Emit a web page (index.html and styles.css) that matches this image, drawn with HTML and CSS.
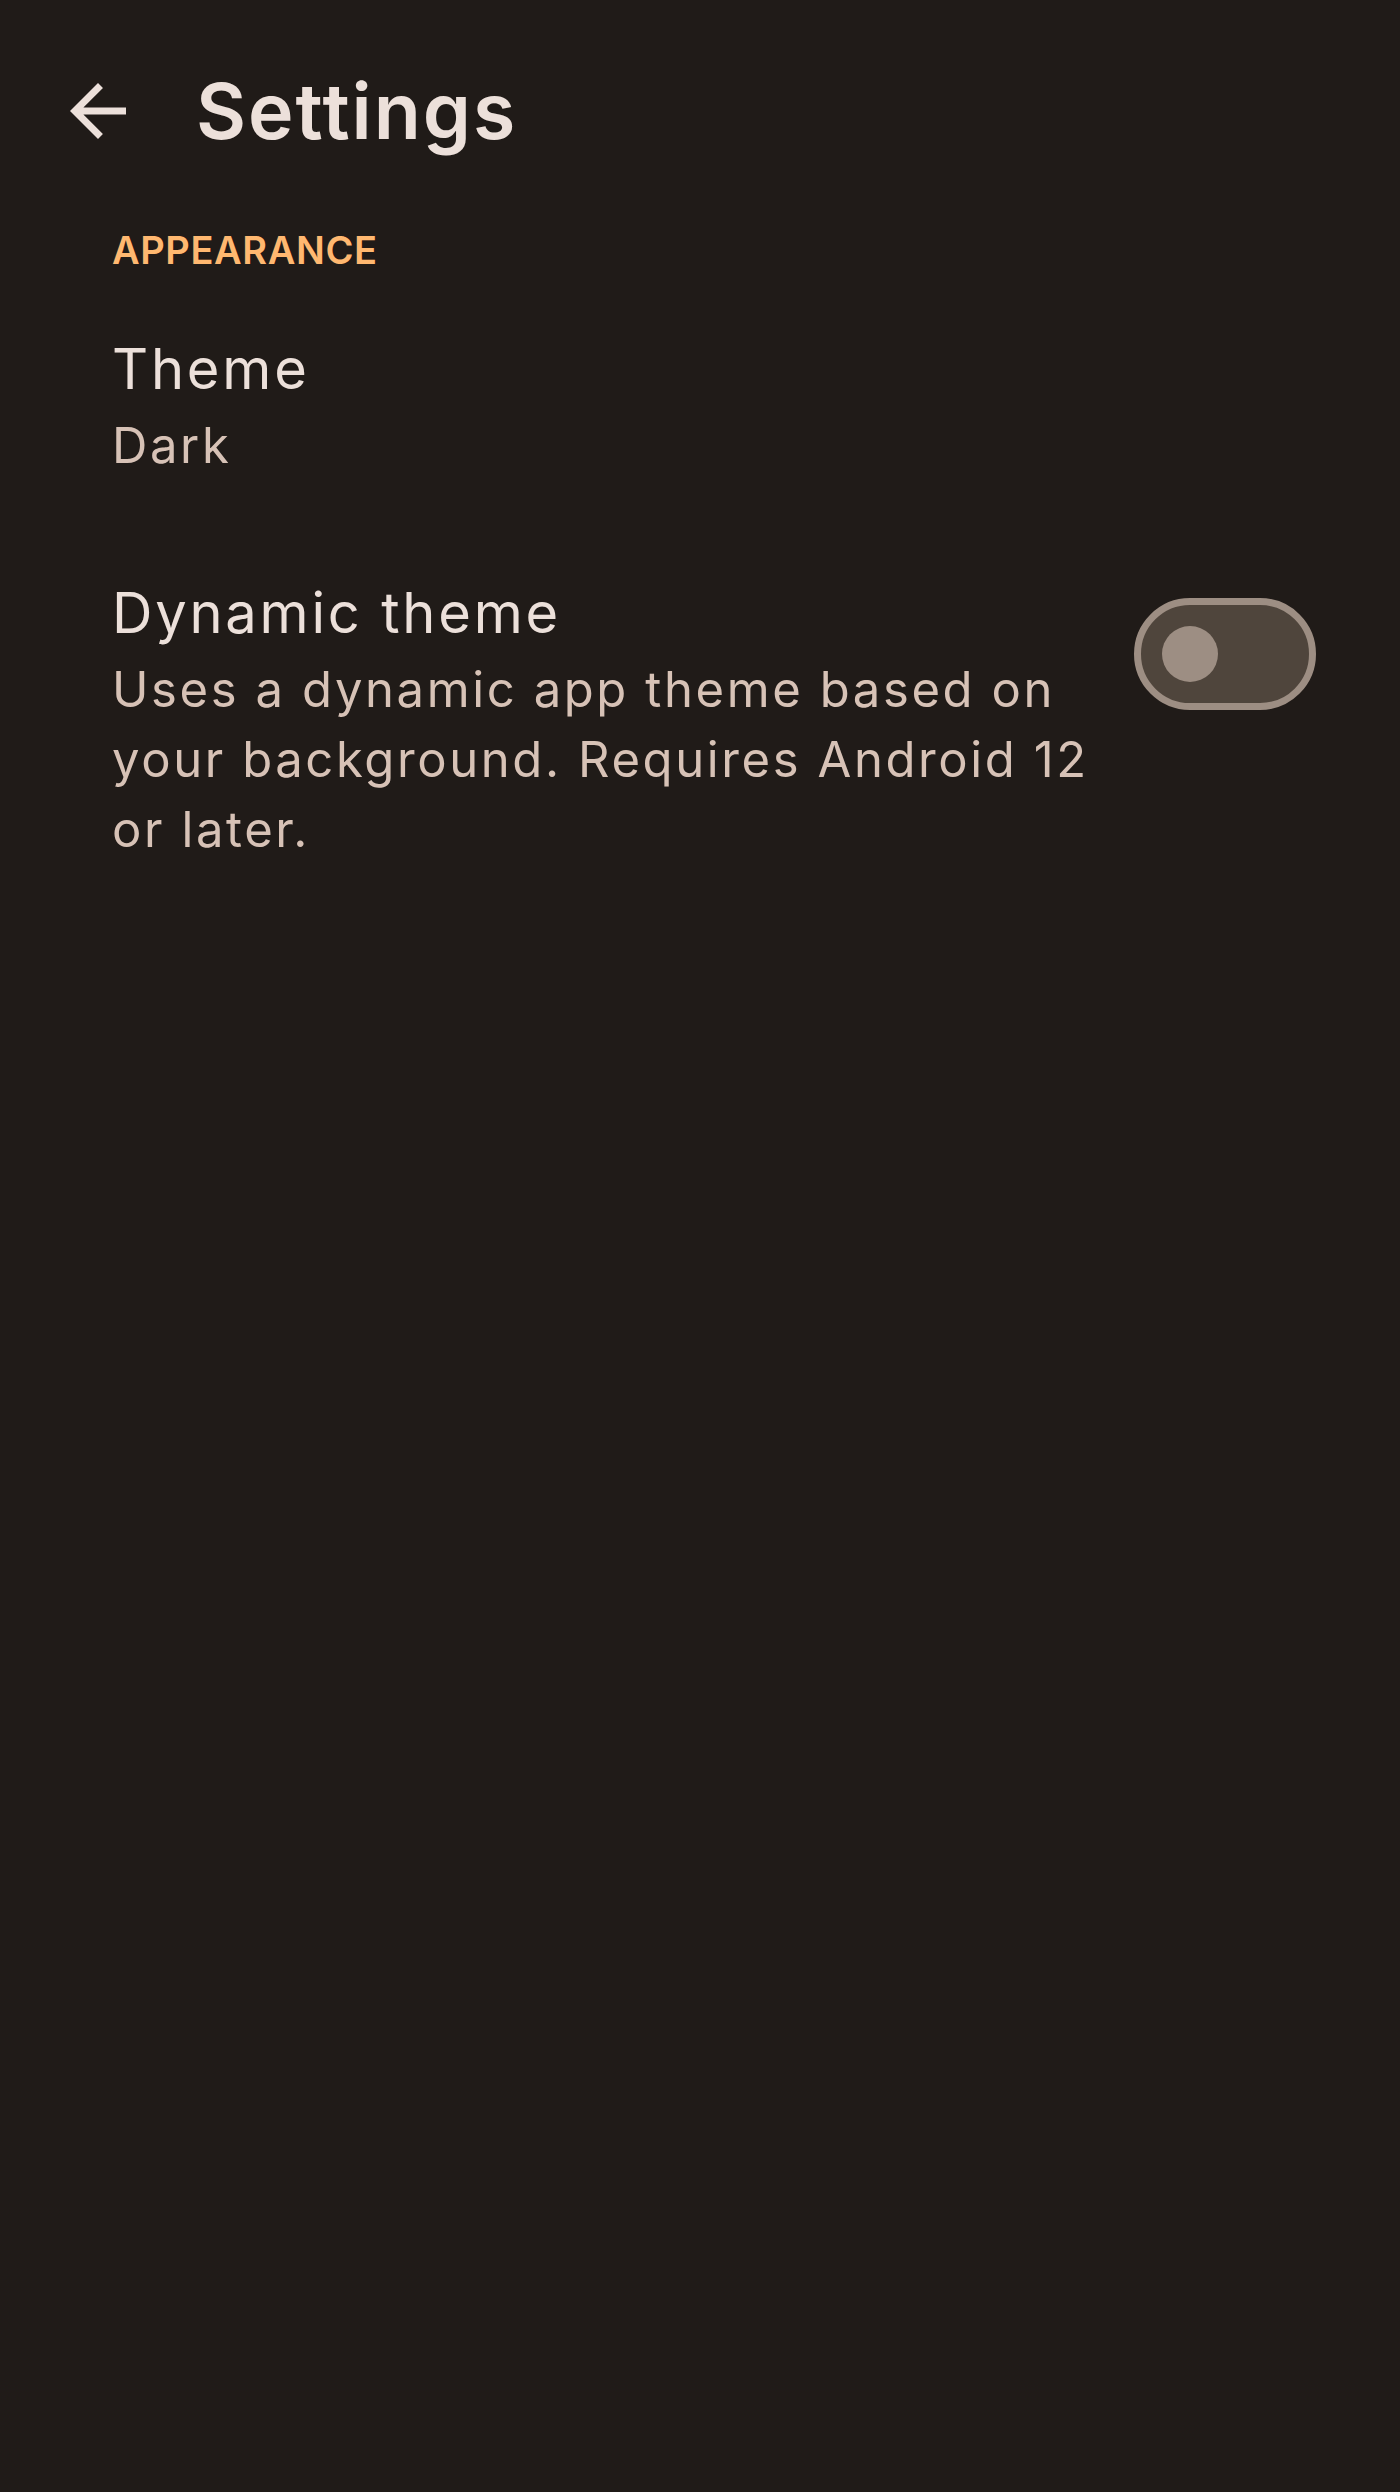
FILE: index.html
```html
<!DOCTYPE html>
<html lang="en">
<head>
<meta charset="utf-8">
<title>Settings</title>
<link rel="stylesheet" href="styles.css">
</head>
<body>
<div class="screen">
  <header class="topbar">
    <button class="nav-btn" aria-label="Back">
      <svg class="nav-icon" viewBox="0 0 24 24" width="84" height="84"><path d="M20 11H7.83l5.59-5.59L12 4l-8 8 8 8 1.41-1.41L7.83 13H20v-2z" fill="currentColor"/></svg>
    </button>
    <h1 class="title">Settings</h1>
  </header>
  <main class="content">
    <div class="section-label">APPEARANCE</div>
    <div class="item item-theme">
      <div class="item-text">
        <div class="item-title">Theme</div>
        <div class="item-sub">Dark</div>
      </div>
    </div>
    <div class="item item-dynamic">
      <div class="item-text">
        <div class="item-title">Dynamic theme</div>
        <div class="item-desc">Uses a dynamic app theme based on your background. Requires Android 12 or later.</div>
      </div>
      <div class="switch" role="switch" aria-checked="false">
        <div class="thumb"></div>
      </div>
    </div>
  </main>
</div>
</body>
</html>
```
FILE: styles.css
```css
html, body {
  margin: 0;
  padding: 0;
  background: #201b18;
}
body {
  font-family: Inter, "Noto Sans", "DejaVu Sans", sans-serif;
  color: #ece0da;
}
.screen {
  width: 1400px;
  min-height: 2492px;
  background: #201b18;
}
.topbar {
  height: 222px;
  display: flex;
  align-items: center;
  padding-left: 14px;
}
.nav-btn {
  width: 168px;
  height: 168px;
  border: 0;
  padding: 0;
  background: transparent;
  color: #ece0da;
  display: flex;
  align-items: center;
  justify-content: center;
}
.nav-icon {
  display: block;
}
.title {
  margin: 0 0 0 14px;
  font-size: 77px;
  line-height: 98px;
  font-weight: 600;
  color: #ece0da;
  letter-spacing: 2px;
}
.content {
  padding-left: 112px;
  padding-right: 84px;
}
.section-label {
  font-size: 38px;
  line-height: 56px;
  font-weight: 600;
  letter-spacing: 0.6px;
  color: #ffb870;
  margin-top: 0;
}
.item {
  display: flex;
  align-items: flex-start;
}
.item-theme {
  margin-top: 49px;
}
.item-dynamic {
  margin-top: 90px;
}
.item-text {
  flex: 1;
  min-width: 0;
  padding-right: 36px;
}
.item-title {
  font-size: 56px;
  line-height: 84px;
  font-weight: 400;
  color: #ece0da;
  letter-spacing: 2.8px;
}
.item-sub, .item-desc {
  font-size: 49px;
  line-height: 70px;
  font-weight: 400;
  color: #d7c2b6;
  letter-spacing: 2.6px;
}
.switch {
  flex: none;
  width: 182px;
  height: 112px;
  box-sizing: border-box;
  margin-top: 27px;
  border: 7px solid #9d8e83;
  border-radius: 56px;
  background: #4f453c;
  display: flex;
  align-items: center;
  padding-left: 21px;
}
.thumb {
  width: 56px;
  height: 56px;
  border-radius: 50%;
  background: #9d8e83;
}
```
